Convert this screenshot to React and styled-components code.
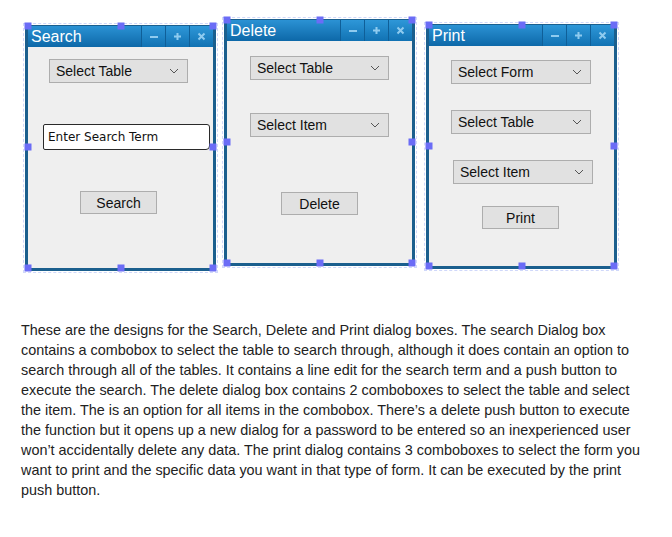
import React from "react";
import styled, { createGlobalStyle } from "styled-components";

const Global = createGlobalStyle`
  body {
    margin: 0;
    background: #ffffff;
    font-family: "Liberation Sans", Arial, sans-serif;
  }
`;

const Page = styled.div`
  width: 672px;
  height: 537px;
  background: #fff;
`;

const Canvas = styled.div`
  display: flex;
  align-items: flex-start;
  height: 320px;
  padding-left: 25px;
`;

const Window = styled.div`
  position: relative;
  box-sizing: border-box;
  width: 191px;
  height: ${(p) => p.$h}px;
  margin-top: ${(p) => p.$top}px;
  margin-left: ${(p) => p.$gap}px;
  border: 3px solid #1b5f8e;
  border-top-width: 1px;
  background: #efefef;
  display: flex;
  flex-direction: column;
  outline: 1px dashed #d0d8fa;
  outline-offset: 1px;
`;

const TitleBar = styled.div`
  height: 21px;
  display: flex;
  align-items: center;
  background: linear-gradient(#2b92d4, #0d68a8);
`;

const Title = styled.span`
  flex: 1;
  color: #fff;
  font-size: 16px;
  padding-left: 3px;
  line-height: 21px;
`;

const TitleButton = styled.div`
  width: 23px;
  height: 21px;
  display: flex;
  align-items: center;
  justify-content: center;
  border-left: 1px solid #0f5f98;
  background: linear-gradient(#2e97d8, #1172b3);
`;

const Body = styled.div`
  flex: 1;
  display: flex;
  flex-direction: column;
  align-items: flex-start;
`;

const Combo = styled.div`
  box-sizing: border-box;
  width: ${(p) => p.$w || 139}px;
  height: 24px;
  margin-left: ${(p) => p.$x}px;
  margin-top: ${(p) => p.$y}px;
  background: #e1e1e1;
  border: 1px solid #adadad;
  display: flex;
  align-items: center;
  justify-content: space-between;
  padding: 0 8px 0 6px;
  font-size: 14px;
  color: #111;
`;

const LineEdit = styled.div`
  box-sizing: border-box;
  width: 167px;
  height: 26px;
  margin-left: ${(p) => p.$x}px;
  margin-top: ${(p) => p.$y}px;
  background: #fff;
  border: 1.5px solid #2a2a2a;
  border-radius: 2px 3px 4px 2px;
  display: flex;
  align-items: center;
  padding-left: 4px;
  font-family: "DejaVu Sans", sans-serif;
  font-size: 12px;
  color: #111;
`;

const Button = styled.div`
  box-sizing: border-box;
  width: 77px;
  height: 23px;
  margin-left: ${(p) => p.$x}px;
  margin-top: ${(p) => p.$y}px;
  background: #e1e1e1;
  border: 1px solid #adadad;
  display: flex;
  align-items: center;
  justify-content: center;
  font-size: 14px;
  color: #111;
`;

const Handle = styled.span`
  position: absolute;
  width: 7px;
  height: 7px;
  background: #6b6cf6;
  left: ${(p) => p.$l};
  top: ${(p) => p.$t};
  transform: translate(-50%, -50%);
`;

const Text = styled.p`
  margin: 0;
  padding-left: 21px;
  font-size: 14.4px;
  line-height: 20px;
  color: #222;
`;

const Chevron = () => (
  <svg width="10" height="6" viewBox="0 0 10 6">
    <path d="M1 1 L5 5 L9 1" fill="none" stroke="#555" strokeWidth="1" />
  </svg>
);

const Minus = () => (
  <svg width="10" height="9" viewBox="0 0 10 9">
    <rect x="1" y="4" width="8" height="2" fill="#8fcbef" />
  </svg>
);

const Plus = () => (
  <svg width="9" height="9" viewBox="0 0 9 9">
    <path d="M4.5 1 V8 M1 4.5 H8" stroke="#8fcbef" strokeWidth="2" />
  </svg>
);

const Close = () => (
  <svg width="9" height="9" viewBox="0 0 9 9">
    <path d="M1.5 1.5 L7.5 7.5 M7.5 1.5 L1.5 7.5" stroke="#8fcbef" strokeWidth="2" />
  </svg>
);

const handles = [
  ["0%", "0%"],
  ["50%", "0%"],
  ["100%", "0%"],
  ["0%", "50%"],
  ["100%", "50%"],
  ["0%", "100%"],
  ["50%", "100%"],
  ["100%", "100%"],
];

const Dialog = ({ title, top, gap, h, children }) => (
  <Window $top={top} $gap={gap} $h={h}>
    <TitleBar>
      <Title>{title}</Title>
      <TitleButton><Minus /></TitleButton>
      <TitleButton><Plus /></TitleButton>
      <TitleButton><Close /></TitleButton>
    </TitleBar>
    <Body>{children}</Body>
    {handles.map(([l, t], i) => (
      <Handle key={i} $l={l} $t={t} />
    ))}
  </Window>
);

const lines = [
  "These are the designs for the Search, Delete and Print dialog boxes. The search Dialog box",
  "contains a combobox to select the table to search through, although it does contain an option to",
  "search through all of the tables. It contains a line edit for the search term and a push button to",
  "execute the search. The delete dialog box contains 2 comboboxes to select the table and select",
  "the item. The is an option for all items in the combobox. There\u2019s a delete push button to execute",
  "the function but it opens up a new dialog for a password to be entered so an inexperienced user",
  "won\u2019t accidentally delete any data. The print dialog contains 3 comboboxes to select the form you",
  "want to print and the specific data you want in that type of form. It can be executed by the print",
  "push button.",
];

export default function App() {
  return (
    <Page>
      <Global />
      <Canvas>
        <Dialog title="Search" top={25} gap={0} h={246}>
          <Combo $x={21} $y={12}>Select Table<Chevron /></Combo>
          <LineEdit $x={15} $y={41}>Enter Search Term</LineEdit>
          <Button $x={52} $y={41}>Search</Button>
        </Dialog>
        <Dialog title="Delete" top={19} gap={8} h={247}>
          <Combo $x={23} $y={15}>Select Table<Chevron /></Combo>
          <Combo $x={23} $y={33}>Select Item<Chevron /></Combo>
          <Button $x={54} $y={55}>Delete</Button>
        </Dialog>
        <Dialog title="Print" top={24} gap={11} h={245}>
          <Combo $x={22} $y={14} $w={140}>Select Form<Chevron /></Combo>
          <Combo $x={22} $y={26} $w={140}>Select Table<Chevron /></Combo>
          <Combo $x={24} $y={26} $w={140}>Select Item<Chevron /></Combo>
          <Button $x={53} $y={22}>Print</Button>
        </Dialog>
      </Canvas>
      <Text>
        {lines.map((l, i) => (
          <React.Fragment key={i}>
            {l}
            {i < lines.length - 1 && <br />}
          </React.Fragment>
        ))}
      </Text>
    </Page>
  );
}
